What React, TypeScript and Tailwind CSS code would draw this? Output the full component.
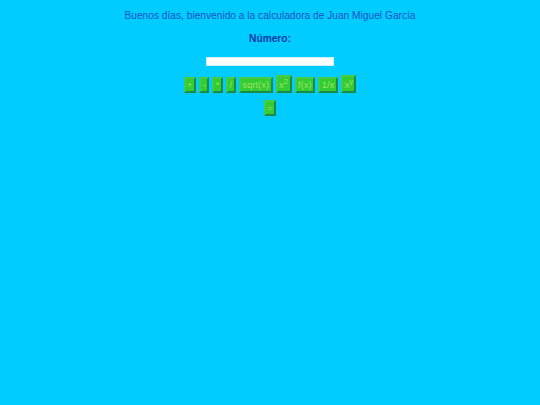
import React from "react";

const base =
  "inline-block align-baseline bg-[#33cc33] text-[#9ee065] text-[9.5px] leading-[10px] px-[1.5px] pb-[1px] border-2 border-t-[#44cc44] border-l-[#44cc44] border-b-[#1a8a4a] border-r-[#1a8a4a] mx-[1.5px] font-['Liberation_Sans',Arial,sans-serif]";
const btn = base + " pt-[1px]";
const btnSup = base + " pt-[3px]";

export default function App() {
  return (
    <div className="min-h-[405px] w-full bg-[#00ccff] text-center font-['Liberation_Sans',Arial,sans-serif]">
      <div className="pt-[10px] text-[10.2px] leading-[12px] text-[#1d55c4]">
        Buenos días, bienvenido a la calculadora de Juan Miguel García
      </div>
      <div className="mt-[11px] text-[10.2px] leading-[12px] font-bold text-[#0b3aa6]">Número:</div>
      <div className="mt-[12px] flex justify-center">
        <input
          type="text"
          className="block h-[9px] w-[128px] bg-white border border-[#cfeffa] outline-none"
        />
      </div>
      <div className="mt-[9px] leading-[16px]">
        <button className={btn}>+</button>
        <button className={btn}>-</button>
        <button className={btn}>*</button>
        <button className={btn}>/</button>
        <button className={btn}>sqrt(x)</button>
        <button className={btnSup}>
          x<sup className="text-[7.5px]">2</sup>
        </button>
        <button className={btn}>f(x)</button>
        <button className={btn}>1/x</button>
        <button className={btnSup}>
          x<sup className="text-[7.5px]">y</sup>
        </button>
      </div>
      <div className="mt-[5px] leading-[16px]">
        <button className={btn}>=</button>
      </div>
    </div>
  );
}
